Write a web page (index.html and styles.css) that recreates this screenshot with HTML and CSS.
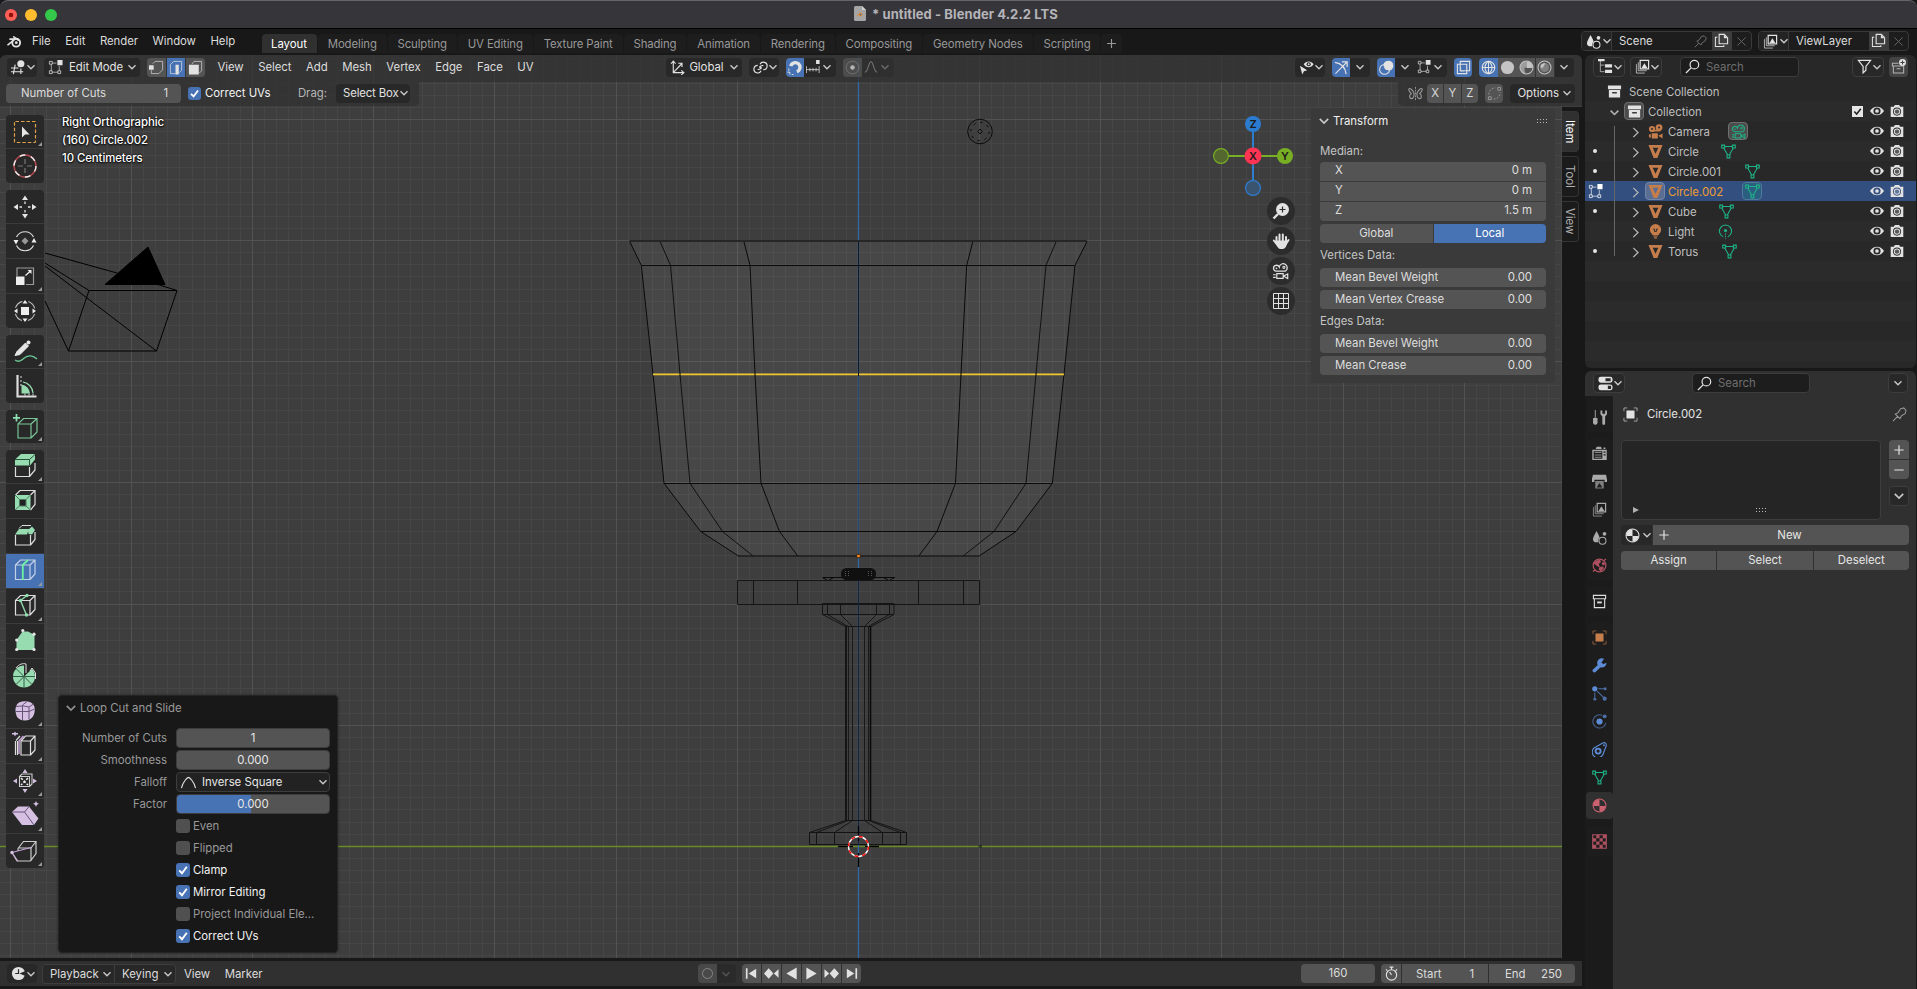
FILE: index.html
```html
<!DOCTYPE html>
<html lang="en">
<head>
<meta charset="utf-8">
<title>* untitled - Blender 4.2.2 LTS</title>
<link rel="stylesheet" href="styles.css">
</head>
<body>
<svg class="sprite" xmlns="http://www.w3.org/2000/svg">
  <symbol id="chev" viewBox="0 0 10 10"><path d="M1.500 3.300L5 6.800 8.500 3.300" fill="none" stroke="currentColor" stroke-width="1.400"/></symbol>
  <symbol id="chevr" viewBox="0 0 10 10"><path d="M3 .8L7.300 5 3 9.200" fill="none" stroke="currentColor" stroke-width="1.200"/></symbol>
  <symbol id="check" viewBox="0 0 14 14"><path d="M3.200 7.300L6 10.200 10.800 3.800" fill="none" stroke="#fff" stroke-width="1.900"/></symbol>
  <symbol id="blender" viewBox="0 0 16 16"><path d="M1 11.500L8.500 5.500H3.200M7.200 3L12 6.600" fill="none" stroke="currentColor" stroke-width="1.700" stroke-linecap="round"/><circle cx="9.800" cy="9.300" r="4.200" fill="none" stroke="currentColor" stroke-width="2"/><circle cx="9.900" cy="9.200" r="1.500" fill="currentColor"/></symbol>
  <symbol id="view3d" viewBox="0 0 16 16"><path d="M0 8.500H8M0 12.500H13M4.500 5L2.500 15M10.500 9V15" fill="none" stroke="currentColor" stroke-width="1.200"/><circle cx="10.500" cy="4" r="3.800" fill="currentColor"/></symbol>
  <symbol id="editmode" viewBox="0 0 16 16"><path d="M3.500 4.500V11.500M4.500 13H10.500M12 6.500V11.500M4.500 3.300H9" fill="none" stroke="currentColor" opacity=".7"/><path d="M1.500 1.500h3v3h-3zM1.500 11.500h3v3h-3zM10.500 11.500h3v3h-3z" fill="none" stroke="currentColor" opacity=".8"/><path d="M10 0h5.500v5.500H10z" fill="currentColor"/></symbol>
  <symbol id="selv" viewBox="0 0 16 16"><path d="M2.500 11V14.500H10.500L14.500 10.500V1.500H6.500L4 4" fill="none" stroke="currentColor" opacity=".7"/><path d="M0 5.500h5v5H0z" fill="currentColor"/></symbol>
  <symbol id="sele" viewBox="0 0 16 16"><path d="M8 14.500H2.500V5L6 1.500H14.500V11L12 13.500" fill="none" stroke="currentColor" opacity=".75"/><path d="M8 5h3.500v10.500H8z" fill="currentColor"/></symbol>
  <symbol id="self" viewBox="0 0 16 16"><path d="M4 4.500L6.500 1.500H14.500V11.500L12 14" fill="none" stroke="currentColor" opacity=".7"/><path d="M1 5h10.500v10.500H1z" fill="currentColor"/></symbol>
  <symbol id="orient" viewBox="0 0 16 16"><path d="M3.500 1V13.500H15M3.500 13.500L12.500 4M1 4L3.500 1.200 6 4M12 11L14.800 13.500 12 15.800M8.800 3.500H12.800V7.500" fill="none" stroke="currentColor" stroke-width="1.200"/></symbol>
  <symbol id="pivot" viewBox="0 0 16 16"><path d="M7.500 4.500A4 4 0 1 1 11 10.300M8.600 11.500A4 4 0 1 1 5 5.800M5 10a4 4 0 0 0 4-1.500M11 6a4 4 0 0 0-4 1.500" fill="none" stroke="currentColor" stroke-width="1.200"/><circle cx="8" cy="8" r="1.300" fill="currentColor"/></symbol>
  <symbol id="magnet" viewBox="0 0 16 16"><path d="M4 6.500A5 5 0 1 1 10.500 12.500" fill="none" stroke="currentColor" stroke-width="3.600"/><path d="M2 9v2.500M5 15.500H7M.5 13h2.500v2.500" stroke="currentColor" fill="none"/></symbol>
  <symbol id="snapinc" viewBox="0 0 16 16"><path d="M.5 7V15M4.500 9V13M8 9V13M11.500 9V13M15 7V15M.5 11H15" fill="none" stroke="currentColor" opacity=".85"/><path d="M11.500 0h4v4.500h-4z" fill="currentColor"/></symbol>
  <symbol id="prop" viewBox="0 0 16 16"><circle cx="8" cy="8" r="6.800" fill="none" stroke="currentColor" opacity=".35"/><circle cx="8" cy="8" r="2.400" fill="currentColor"/></symbol>
  <symbol id="smooth" viewBox="0 0 16 16"><path d="M1 14C5 14 5 2 8 2S11 14 15 14" fill="none" stroke="currentColor" stroke-width="1.200"/></symbol>
  <symbol id="invsq" viewBox="0 0 16 16"><path d="M.5 14C2 7 7 2.500 8 2.500S14 7 15.500 14" fill="none" stroke="currentColor" stroke-width="1.200"/></symbol>
  <symbol id="viewobj" viewBox="0 0 16 16"><path d="M5 4.500C7.500.5 13 .5 15.500 4.500 13 8.800 7.500 8.800 5 4.500z" fill="currentColor"/><circle cx="10.300" cy="4.500" r="2.200" fill="#282828"/><circle cx="10.300" cy="4.500" r="1" fill="currentColor"/><path d="M1 6L3.500 15.500 5.300 12 8.800 11z" fill="currentColor"/></symbol>
  <symbol id="gizmo" viewBox="0 0 16 16"><path d="M1 2.500C8 3.500 12 8 13 15M1.500 14.500L13.500 2.500M8.500 2H14V7.500" fill="none" stroke="currentColor" stroke-width="1.300"/></symbol>
  <symbol id="overlay" viewBox="0 0 16 16"><circle cx="10" cy="6" r="5.300" fill="currentColor"/><circle cx="6" cy="10" r="5.300" fill="none" stroke="currentColor" stroke-width="1.100"/><path d="M5 6.500a4 4 0 0 0 4.500 4.800" fill="none" stroke="#4772b3"/></symbol>
  <symbol id="xray" viewBox="0 0 16 16"><path d="M4.500 1.500h10v10h-10zM1.500 4.500h10v10h-10z" fill="none" stroke="currentColor" stroke-width="1.200"/><path d="M5 8v4h4" fill="none" stroke="currentColor" stroke-dasharray="1 1"/></symbol>
  <symbol id="wire" viewBox="0 0 16 16"><circle cx="8" cy="8" r="6.700" fill="none" stroke="currentColor" stroke-width="1.200"/><path d="M8 1V15M1 8H15M8 1.300C3 5 3 11 8 14.700M8 1.300C13 5 13 11 8 14.700" fill="none" stroke="currentColor" stroke-width="1.100"/></symbol>
  <symbol id="solid" viewBox="0 0 16 16"><circle cx="8" cy="8" r="7" fill="currentColor"/></symbol>
  <symbol id="matball" viewBox="0 0 16 16"><circle cx="8" cy="8" r="6.900" fill="none" stroke="currentColor" stroke-width="1.100"/><path d="M8 1.300V8.500H1.300A6.700 6.700 0 0 1 8 1.300zM8 8.500H14.600A6.700 6.700 0 0 1 8 14.700z" fill="currentColor"/></symbol>
  <symbol id="shadball" viewBox="0 0 16 16"><circle cx="8" cy="8" r="6.900" fill="none" stroke="currentColor" stroke-width="1.100"/><path d="M8 1.300A6.700 6.700 0 0 0 1.300 8C1.300 12 4 14.700 8 14.700 6 13 5.500 10.500 6 8H8z" fill="currentColor" opacity=".65"/><path d="M8 1.300V8.500H14.600A6.700 6.700 0 0 0 8 1.300z" fill="currentColor"/></symbol>
  <symbol id="rendball" viewBox="0 0 16 16"><circle cx="8" cy="8" r="6.900" fill="none" stroke="currentColor" stroke-width="1.100"/><circle cx="8" cy="8" r="4.800" fill="currentColor" opacity=".4"/><path d="M3.500 7A5 5 0 0 1 9 3.500L5.500 9z" fill="currentColor"/></symbol>
  <symbol id="mirror" viewBox="0 0 16 16"><path d="M6.500 8C5 3 1 1.500.8 3.500S3 7.500 3.500 8C1 9.500 1.500 13.500 3.500 13.500S6.500 11 6.500 8zM9.500 8C11 3 15 1.500 15.200 3.500S13 7.500 12.500 8C15 9.500 14.500 13.500 12.500 13.500S9.500 11 9.500 8z" fill="none" stroke="currentColor" stroke-width="1.200"/><path d="M8 1V15.500" stroke="currentColor" stroke-dasharray="2 1"/></symbol>
  <symbol id="automerge" viewBox="0 0 16 16"><path d="M1.500 11.500h3v3h-3zM11.500 1.500h3v3h-3z" fill="none" stroke="currentColor"/><path d="M2 9C2 5 5 2 9 2M7 14C11 14 14 11 14 7" fill="none" stroke="currentColor" stroke-dasharray="2 1.500"/></symbol>
  <symbol id="scene" viewBox="0 0 16 16"><path d="M4.800 1C7 5 8.500 7.500 8.500 10A3.800 3.800 0 0 1 1 10C1 7.500 3 5 4.800 1z" fill="currentColor"/><circle cx="11" cy="11.500" r="4.400" fill="var(--bg,#181818)"/><circle cx="11.200" cy="11.500" r="3.700" fill="none" stroke="currentColor" stroke-width="1.100"/><circle cx="13.300" cy="4" r="2" fill="currentColor"/></symbol>
  <symbol id="layers" viewBox="0 0 16 16"><path d="M5.500 1.500h9v9h-9z" fill="none" stroke="currentColor" stroke-width="1.300"/><path d="M3.500 3.500v9h9M1.500 5.500v9.500h9" fill="none" stroke="currentColor" opacity=".75"/><path d="M7 9.500L10 4.500 13.200 9.500z" fill="currentColor"/></symbol>
  <symbol id="pin" viewBox="0 0 16 16"><path d="M1 15L6 10M3.500 7.500L8.500 12.500 10 9.500 14 7 15 3.500 12.500 1 9 2 6.500 6z" fill="none" stroke="currentColor" stroke-width="1.100"/></symbol>
  <symbol id="dup" viewBox="0 0 16 16"><path d="M5.500 1.500H11L14.500 5V11.500H5.500z" fill="none" stroke="currentColor" stroke-width="1.200"/><path d="M10.500 1.500V5.500H14.500z" fill="currentColor"/><path d="M3.500 4.500H1.500V14.500H10.500V13" fill="none" stroke="currentColor" stroke-width="1.100"/></symbol>
  <symbol id="ex" viewBox="0 0 16 16"><path d="M3 3L13 13M13 3L3 13" stroke="currentColor" stroke-width="1.200" fill="none"/></symbol>
  <symbol id="outl" viewBox="0 0 16 16"><path d="M2.500 1V13.500H7M2.500 6.500H7" fill="none" stroke="currentColor" opacity=".7"/><path d="M0 0h7v2.500H0zM7.500 5.500H15V9H7.500zM7.500 11.500H15V15H7.500z" fill="currentColor"/></symbol>
  <symbol id="search" viewBox="0 0 16 16"><circle cx="10" cy="6" r="4.600" fill="none" stroke="currentColor" stroke-width="1.300"/><path d="M6.500 9.500L1 15" stroke="currentColor" stroke-width="1.400"/></symbol>
  <symbol id="filter" viewBox="0 0 16 16"><path d="M1.500 1.500H14.500L9.500 8V12L6.500 14.800V8z" fill="none" stroke="currentColor" stroke-width="1.300"/></symbol>
  <symbol id="newcol" viewBox="0 0 16 16"><path d="M8 4.500H1.500V7.500H14M2.500 7.500V15H13.500V8M6 10.500H10" fill="none" stroke="currentColor" stroke-width="1.100" opacity=".7"/><circle cx="12.300" cy="3.700" r="3.700" fill="currentColor"/><path d="M12.300 1.500v4.400M10.100 3.700h4.400" stroke="#444" stroke-width="1.100"/></symbol>
  <symbol id="coll" viewBox="0 0 16 16"><path d="M1 1.500h14v4H1zM2 6.500h12v8H2z" fill="currentColor"/><path d="M5.500 8.500h5v1.700h-5z" fill="#3a3a3a"/></symbol>
  <symbol id="collo" viewBox="0 0 16 16"><path d="M1.500 1.500h13v3.500h-13zM2.500 5.500V14.500H13.500V5.500" fill="none" stroke="currentColor" stroke-width="1.200"/><path d="M5.500 8h5v2h-5z" fill="currentColor"/></symbol>
  <symbol id="cam" viewBox="0 0 16 16"><circle cx="4.300" cy="5.300" r="3.300" fill="currentColor"/><circle cx="11.800" cy="3.800" r="3.600" fill="currentColor"/><circle cx="4.300" cy="5.300" r="1.100" fill="#2b2b2b"/><circle cx="11.800" cy="3.800" r="1.100" fill="#2b2b2b"/><path d="M4 6h9v2H4zM4 9.800h6.500v5.700H4zM1 11h2v3.500H1zM11 12.500L15.500 10v5.500z" fill="currentColor"/></symbol>
  <symbol id="camo" viewBox="0 0 16 16"><path d="M4 8.200A2.800 2.800 0 1 1 6.800 4.300 3.800 3.800 0 1 1 12.500 8.200z" fill="none" stroke="currentColor" stroke-width="1.200"/><circle cx="4.200" cy="5.500" r=".8" fill="currentColor"/><circle cx="11.200" cy="4.500" r="1" fill="none" stroke="currentColor"/><path d="M4.500 10.500h6v4.500h-6zM1 11.500h2.500M1 14h2.500M11 12.700l3.800-2v4.500z" fill="none" stroke="currentColor" stroke-width="1.100"/></symbol>
  <symbol id="mesh" viewBox="0 0 16 16"><path d="M.5 1H15.500L10 14.800H6zM5 4L8 10.500 11 4z" fill="currentColor" fill-rule="evenodd"/></symbol>
  <symbol id="meshd" viewBox="0 0 16 16"><path d="M.8 1.200h3v3h-3zM12.200 1.200h3v3h-3zM6.500 11.800h3v3h-3zM4 2.700H12M3 4.500L7 11.500M13 4.500L9 11.500" fill="none" stroke="currentColor" stroke-width="1.150"/></symbol>
  <symbol id="bulb" viewBox="0 0 16 16"><circle cx="8" cy="6" r="6" fill="currentColor"/><path d="M5 9h6v2.300H5zM5.500 12.700h5M6.500 14.800h3" stroke="currentColor" stroke-width="1.100" fill="currentColor"/><path d="M5.500 5.500h1.500v2.500h2V5.500h1.500" stroke="#2b2b2b" fill="none"/></symbol>
  <symbol id="lightd" viewBox="0 0 16 16"><path d="M5.500 13.500A6.500 6.500 0 1 1 10.500 13.500" fill="none" stroke="currentColor" stroke-width="1.150"/><circle cx="8" cy="7" r="1.700" fill="currentColor"/><path d="M8 10v5.800" stroke="currentColor" stroke-dasharray="1.500 1"/></symbol>
  <symbol id="eye" viewBox="0 0 16 16"><path d="M0 8C4 1.500 12 1.500 16 8 12 14.500 4 14.500 0 8z" fill="currentColor"/><circle cx="8" cy="8" r="4.100" fill="var(--row,#2a2a2a)"/><circle cx="8" cy="8" r="2.100" fill="currentColor"/></symbol>
  <symbol id="photo" viewBox="0 0 16 16"><path d="M.8 3H4.500L5.500 1H10.500L11.500 3H15.200V14.800H.8z" fill="currentColor"/><circle cx="8" cy="8.700" r="4.600" fill="var(--row,#2a2a2a)"/><circle cx="8" cy="8.700" r="3.600" fill="currentColor"/><circle cx="8" cy="8.700" r="2.500" fill="var(--row,#2a2a2a)" opacity=".75"/></symbol>
  <symbol id="props" viewBox="0 0 16 16"><rect x=".5" y=".8" width="15" height="6.300" rx="2.500" fill="currentColor"/><rect x=".5" y="9" width="15" height="6.300" rx="2.500" fill="currentColor"/><path d="M8 2.300h5.500v3.400H8zM10.500 10.500h3.500v3.400h-3.500z" fill="#282828"/></symbol>
  <symbol id="tool" viewBox="0 0 16 16"><path d="M3.500 0V8" stroke="currentColor"/><path d="M1 9.500C1 8 6 8 6 9.500S5.500 10.500 6 12.500a2.500 3.200 0 0 1-5 0C1.500 10.500 1 10.500 1 9.500z" fill="currentColor"/><path d="M9 .5v4L11 7v7.500a1.500 1.500 0 0 0 3 0V7l2-2.500v-4h-2v3.500h-3V.5z" fill="currentColor"/></symbol>
  <symbol id="render" viewBox="0 0 16 16"><path d="M4 3.200L5 .8h4.500l1 2.400zM12.300 1.500h2v1.700h-2zM.3 4h15.400v11H.3z" fill="currentColor"/><path d="M1.800 5.500h9.200v8H1.800z" fill="#1d1d1d"/><path d="M3 7h7M3 9.500h7M3 12h7" stroke="currentColor" stroke-width="1.100" opacity=".75"/><path d="M12.300 6.500h2.200M12.300 9.500h2.200" stroke="#1d1d1d" stroke-width="1.300"/></symbol>
  <symbol id="output" viewBox="0 0 16 16"><path d="M1 .8h14L16 6v2.500h-2.500V6h-11v2.500H0V5z" fill="currentColor"/><path d="M3.500 7.500h9v8h-9z" fill="currentColor" opacity=".7"/><path d="M5 14.500L8 9.500 11 14.500z" fill="#1d1d1d"/></symbol>
  <symbol id="world" viewBox="0 0 16 16"><circle cx="8" cy="8" r="6.800" fill="none" stroke="currentColor" stroke-width="1.300"/><path d="M2 6C4 2.500 6 2 9 2.300L9.500 4.500 7 6.500 8.500 9 7 9.500 4 7.500zM8 9.500L12 9 12.500 11.500 9 14 7 12zM11 4l3 1.500-1 2.500-2.500-1z" fill="currentColor"/><path d="M1 14.500L3.500 12.500M12.500 3L15 1" stroke="currentColor" stroke-width="1.300"/></symbol>
  <symbol id="object" viewBox="0 0 16 16"><path d="M1 4.500V1h3.500M11.500 1H15v3.500M15 11.500V15h-3.500M4.500 15H1v-3.500" fill="none" stroke="currentColor" opacity=".65"/><path d="M3.700 3.700h8.600v8.600H3.700z" fill="currentColor"/></symbol>
  <symbol id="wrench" viewBox="0 0 16 16"><path d="M2.500 13.500L9 7.500" stroke="currentColor" stroke-width="3.800" stroke-linecap="round"/><path d="M12.800.8A5 5 0 1 0 15.500 5L12.500 6.500 10 5z" fill="currentColor"/></symbol>
  <symbol id="particles" viewBox="0 0 16 16"><circle cx="3" cy="3" r="2.800" fill="currentColor"/><g opacity=".75"><path d="M7 3H13M3 7V13M5.500 5.500L13 13" stroke="currentColor" stroke-width="1.100"/><circle cx="14" cy="3" r="1.600" fill="currentColor"/><circle cx="3" cy="14" r="1.600" fill="currentColor"/><circle cx="13.500" cy="13.500" r="2.200" fill="currentColor"/></g></symbol>
  <symbol id="physics" viewBox="0 0 16 16"><circle cx="8" cy="8" r="3.300" fill="currentColor"/><path d="M10.500 1.400A7 7 0 1 0 14.800 9.500" fill="none" stroke="currentColor" stroke-width="1.100" opacity=".65"/><circle cx="13.500" cy="2.500" r="2.100" fill="currentColor" opacity=".75"/></symbol>
  <symbol id="constr" viewBox="0 0 16 16"><circle cx="6.500" cy="9.700" r="2.700" fill="none" stroke="currentColor" stroke-width="2"/><path d="M2 6.500L11.500 1C14 0 16 2 15 4.500L12 12.500A6 6 0 1 1 2 6.500z" fill="none" stroke="currentColor" stroke-width="1.200"/><circle cx="12.700" cy="3.500" r="1" fill="currentColor"/></symbol>
  <symbol id="checker" viewBox="0 0 16 16"><path d="M.8.800h14.400v14.400H.8z" fill="none" stroke="currentColor" stroke-width="1.300"/><path d="M4.500 1h3.500v3.500H4.500zM11.500 1H15v3.500h-3.500zM1 4.500h3.500V8H1zM8 4.500h3.500V8H8zM4.500 8H8v3.500H4.500zM11.500 8H15v3.500h-3.500zM1 11.500h3.500V15H1zM8 11.500h3.500V15H8z" fill="currentColor"/></symbol>
  <symbol id="plus" viewBox="0 0 16 16"><path d="M8 3.300V12.700M3.300 8H12.700" stroke="currentColor" stroke-width="1.200"/></symbol>
  <symbol id="minus" viewBox="0 0 16 16"><path d="M3.300 8H12.700" stroke="currentColor" stroke-width="1.200"/></symbol>
  <symbol id="timeline" viewBox="0 0 16 16"><circle cx="8" cy="8" r="7" fill="currentColor"/><path d="M8 3.500V8L4.500 8" stroke="#282828" stroke-width="1.300" fill="none"/><path d="M9 8L16 5V11z" fill="#282828"/></symbol>
  <symbol id="clock" viewBox="0 0 16 16"><circle cx="8" cy="9.500" r="5.500" fill="none" stroke="currentColor" stroke-width="1.200"/><path d="M8 9.500L6 6.500M8 4V1.500M6 1.200h4M2 3.500L3.500 5M14 3.500L12.500 5" fill="none" stroke="currentColor" stroke-width="1.200"/></symbol>
</svg>

<div class="titlebar">
  <span class="light red"></span><span class="light amber"></span><span class="light green"></span>
  <div class="wtitle"><svg width="12" height="15" viewBox="0 0 12 15"><path d="M0 1.500Q0 0 1.500 0H8L12 4V13.500Q12 15 10.500 15H1.500Q0 15 0 13.500z" fill="#a5a5a6"/><path d="M8 0L12 4H8z" fill="#d0d0d0"/><circle cx="6.500" cy="8.500" r="2" fill="#d6883f"/><path d="M2.500 10L6 7" stroke="#d6883f"/><circle cx="6.600" cy="8.500" r=".8" fill="#3d6c9a"/></svg><span>* untitled - Blender 4.2.2 LTS</span></div>
</div>

<div class="topbar">
  <svg class="i16 blogo"><use href="#blender"/></svg>
  <div class="menus main"><span>File</span><span>Edit</span><span>Render</span><span>Window</span><span>Help</span></div>
  <div class="wtabs"><span class="on">Layout</span><span>Modeling</span><span>Sculpting</span><span>UV Editing</span><span>Texture Paint</span><span>Shading</span><span>Animation</span><span>Rendering</span><span>Compositing</span><span>Geometry Nodes</span><span>Scripting</span><span class="add"><svg class="i16"><use href="#plus"/></svg></span></div>
  <div class="idsel scene"><div class="ic"><svg class="i16"><use href="#scene"/></svg><svg class="cv"><use href="#chev"/></svg></div><span>Scene</span><svg class="i14 dim"><use href="#pin"/></svg><div class="sq"><svg class="i16"><use href="#dup"/></svg></div><div class="xx"><svg class="i14"><use href="#ex"/></svg></div></div>
  <div class="idsel vlayer"><div class="ic"><svg class="i16"><use href="#layers"/></svg><svg class="cv"><use href="#chev"/></svg></div><span>ViewLayer</span><div class="sq"><svg class="i16"><use href="#dup"/></svg></div><div class="xx"><svg class="i14"><use href="#ex"/></svg></div></div>
</div>

<div class="workspace">
 <div class="leftcol">
  <div class="viewport">
   <svg class="scene3d" width="1562" height="903" viewBox="0 55 1562 903">
    <g id="grid" shape-rendering="crispEdges"></g>
    <path d="M0 846.500H1562" stroke="#678b26" stroke-width="1.500"/>
    <path d="M858.500 55V958" stroke="#3168a6" stroke-width="1.300"/>
    <path d="M629.700 241H1087L1075 265.300 1064 374.300 1052.300 483.300 1016 531.500 979.500 555.700H738L700.700 531.500 664 483.300 653 374.300 641.300 265.300z" fill="#fff" fill-opacity=".05"/>
    <path d="M980.500 143V955" stroke="#333" stroke-width="1" opacity=".7"/>
    <g fill="none" stroke="#0a0a0a" stroke-width="1">
     <path d="M629.700 241.500L641.300 265.300 653 374.300 664 483.300 700.700 531.500 738 555.700M1087 241.500L1075 265.300 1064 374.300 1052.300 483.300 1016 531.500 979.500 555.700"/>
     <path d="M641.500 265.500H1075M664 483.500H1052.300M700.700 531.500H1016"/>
     <path d="M629.500 241H1087" stroke="#262626" stroke-width="2"/><path d="M738 556H979.500" stroke="#1c1c1c" stroke-width="1.600"/>
     <path d="M744 242L750 265.300 755 374.300 761 483.300 779.500 531.500 797.500 555.700M972.700 242L966.700 265.300 961 374.300 955.500 483.300 937 531.500 919 555.700"/>
     <path d="M660.300 242L670.500 265.300 680 374.300 690 483.300 722.500 531.500 752.700 555.700M1056 242L1046 265.300 1036 374.300 1026 483.300 994 531.500 963.500 555.700" stroke-width=".9"/>
     <path d="M858.500 242V374" stroke="#0c1a30"/><path d="M858.500 374V556" stroke="#0c1a30" stroke-opacity=".45"/>
     <path d="M737.500 580.500H979.500V604.500H737.500zM753.500 580.500V604.500M797.500 580.500V604.500M918.500 580.500V604.500M963.500 580.500V604.500" stroke="#151515"/>
     <path d="M822.500 577.500H895M823 578L827 580M890 580L894 578M829 580l4-2M884 578l4 2"/>
     <path d="M822.500 603.500H894V614.500H822.500zM827.500 604V614M840.500 604V614M876.500 604V614M889.500 604V614M822.500 614.500L845.500 626.500H871L894 614.500M827.500 614.500L848 626.500M889.500 614.500L868.500 626.500M840.500 614.500L852.500 626.500M876.500 614.500L864.500 626.500" stroke="#151515"/>
     <path d="M846 626.500V820.500M870.500 626.500V820.500" stroke-width="1.600"/>
     <path d="M848.500 626.500V820.500M852.500 626.500V820.500M864.500 626.500V820.500M868.500 626.500V820.500" stroke="#191919"/>
     <path d="M858.500 580V844" stroke="#152238"/>
     <path d="M845.500 820.500H871L906.500 832.500V844.500H809.500V832.500L845.500 820.500M809.500 832.500H906.500M848 820.500L816.500 832.500V844M868.500 820.500L900.500 832.500V844M852.500 820.500L834.500 832.500V844M864.500 820.500L882.500 832.500V844" stroke="#141414"/>
     <path d="M838 846.500H853M865 846.500H879M858.500 826V841M858.500 853V867" stroke="#000" stroke-width="1.300"/>
    </g>
    <rect x="841" y="568" width="35" height="12" rx="5.500" fill="#101010"/><path d="M845.500 571v6M848.500 571v6M868.500 571v6M871.500 571v6" stroke="#555" stroke-dasharray="1 1" fill="none"/>
    <path d="M653 374.300H1064" stroke="#f0c52e" stroke-width="1.700"/>
    <path d="M680 373v3M755 373v3M858.500 373v3M961 373v3M1036 373v3" stroke="#111"/>
    <rect x="856.800" y="554.300" width="3.400" height="3.400" fill="#f08a28" stroke="#3a2008" stroke-width=".8"/>
    <circle cx="858.500" cy="846.500" r="10" fill="none" stroke="#fff" stroke-width="1.300"/><circle cx="858.500" cy="846.500" r="10" fill="none" stroke="#f00" stroke-width="1.400" stroke-dasharray="3.930 3.930"/>
    <circle cx="980.300" cy="846.300" r="1.300" fill="none" stroke="#222"/>
    <g fill="none" stroke="#000"><path d="M105 284.500L148 247 165 284.500z" fill="#000"/><path d="M89 290.500H177L156.500 351H68.500zM45 253L117 273M158 284.500L177 290.500M45 263L89 290.500M45 266L156.500 351M45 301L68.500 351"/></g>
    <g fill="none" stroke="#0a0a0a"><circle cx="980" cy="131.500" r="12.300"/><circle cx="980" cy="131.500" r="9.200" stroke-dasharray="2.500 4.700"/><path d="M980 129l2.300 2.500-2.300 2.500-2.300-2.500z"/></g>
    <g stroke-width="2"><path d="M1253 124V188" stroke="#2f7dce"/><path d="M1221 156H1285" stroke="#78ae24"/><circle cx="1253" cy="124" r="8" fill="#2b7cd0"/><circle cx="1285" cy="156" r="8" fill="#78ae24"/><circle cx="1221" cy="156" r="7.400" fill="#53672f" stroke="#78ae24" stroke-width="1.200"/><circle cx="1253" cy="188" r="7.400" fill="#3a5470" stroke="#2f7dce" stroke-width="1.200"/><circle cx="1253" cy="156" r="8.500" fill="#ff3352"/></g>
    <g class="axis"><text x="1253" y="128.300">Z</text><text x="1253" y="160.300">X</text><text x="1285" y="160.300">Y</text></g>
    <g fill="#2c2c2c"><circle cx="1281" cy="211" r="14"/><circle cx="1281" cy="241" r="14"/><circle cx="1281" cy="271" r="14"/><circle cx="1281" cy="301" r="14"/></g>
    <circle cx="1282.500" cy="209.500" r="6.500" fill="#e2e2e2"/><path d="M1278 214L1273.500 218.500" stroke="#e2e2e2" stroke-width="2.400"/><path d="M1279.500 209.500h6M1282.500 206.500v6" stroke="#2c2c2c" stroke-width="1.200"/>
    <path d="M1276.500 237V242M1279.500 234.500V241M1282.800 234.500V241M1286 237V241M1273.800 240.500L1277 244.500M1288.500 240L1286 244" stroke="#e2e2e2" stroke-width="2" stroke-linecap="round"/><path d="M1275.500 240.500H1287V243.500C1286.500 247 1285 249 1281.500 249S1277.500 247 1275.500 243.500z" fill="#e2e2e2"/>
    <g color="#e2e2e2"><use href="#camo" x="1272" y="262.500" width="17" height="17"/></g>
    <path d="M1273.500 293.500h15v15h-15zM1278.500 293.500v15M1283.500 293.500v15M1273.500 298.500h15M1273.500 303.500h15" fill="none" stroke="#e2e2e2"/>
   </svg>

   <div class="vhead">
    <div class="dd w30"><svg class="i16"><use href="#view3d"/></svg><svg class="cv"><use href="#chev"/></svg></div>
    <div class="dd mode"><svg class="i16"><use href="#editmode"/></svg><span>Edit Mode</span><svg class="cv"><use href="#chev"/></svg></div>
    <div class="grp selm"><div><svg class="i16"><use href="#selv"/></svg></div><div class="blue"><svg class="i16"><use href="#sele"/></svg></div><div><svg class="i16"><use href="#self"/></svg></div></div>
    <div class="menus vm"><span>View</span><span>Select</span><span>Add</span><span>Mesh</span><span>Vertex</span><span>Edge</span><span>Face</span><span>UV</span></div>
    <div class="hmid">
     <div class="dd glob"><svg class="i16"><use href="#orient"/></svg><span>Global</span><svg class="cv"><use href="#chev"/></svg></div>
     <div class="dd w30"><svg class="i16"><use href="#pivot"/></svg><svg class="cv"><use href="#chev"/></svg></div>
     <div class="grp"><div class="blue"><svg class="i16"><use href="#magnet"/></svg></div><div class="dark"><svg class="i16 sm"><use href="#snapinc"/></svg><svg class="cv"><use href="#chev"/></svg></div></div>
     <div class="grp off"><div><svg class="i16"><use href="#prop"/></svg></div><div class="dark"><svg class="i16 sm"><use href="#smooth"/></svg><svg class="cv"><use href="#chev"/></svg></div></div>
    </div>
    <div class="hright">
     <div class="dd w30"><svg class="i16"><use href="#viewobj"/></svg><svg class="cv"><use href="#chev"/></svg></div>
     <div class="grp"><div class="blue"><svg class="i16"><use href="#gizmo"/></svg></div><div class="dark cvo"><svg class="cv"><use href="#chev"/></svg></div></div>
     <div class="grp"><div class="blue"><svg class="i16"><use href="#overlay"/></svg></div><div class="dark cvo"><svg class="cv"><use href="#chev"/></svg></div><div class="dark"><svg class="i16 sm"><use href="#editmode"/></svg><svg class="cv"><use href="#chev"/></svg></div></div>
     <div class="grp"><div class="blue"><svg class="i16"><use href="#xray"/></svg></div></div>
     <div class="grp shad"><div class="blue"><svg class="i16"><use href="#wire"/></svg></div><div><svg class="i16"><use href="#solid"/></svg></div><div><svg class="i16"><use href="#shadball"/></svg></div><div><svg class="i16"><use href="#rendball"/></svg></div><div class="dark cvo"><svg class="cv"><use href="#chev"/></svg></div></div>
    </div>
   </div>
   <div class="vtool">
    <div class="tleft"><div class="num"><span>Number of Cuts</span><span>1</span></div><svg class="cb on"><use href="#check"/></svg><span class="wh">Correct UVs</span><span class="drag">Drag:</span><div class="dd sbox"><span>Select Box</span><svg class="cv"><use href="#chev"/></svg></div></div>
    <div class="tright"><svg class="i16 grey"><use href="#mirror"/></svg><div class="grp xyz"><div>X</div><div>Y</div><div>Z</div></div><div class="grp dimg"><div><svg class="i16"><use href="#automerge"/></svg></div></div><div class="dd opt"><span>Options</span><svg class="cv"><use href="#chev"/></svg></div></div>
   </div>

   <div class="vinfo"><div>Right Orthographic</div><div>(160) Circle.002</div><div>10 Centimeters</div></div>

   <div class="toolbar">
    <div class="tg">
     <div class="tb c"><svg viewBox="0 0 24 24"><rect x="1.500" y="1.500" width="21" height="21" rx="1" fill="none" stroke="#e0a24a" stroke-width="1.200" stroke-dasharray="3.500 2"/><path d="M9 6.500V17.500L12 14.500H16.500z" fill="#e6e6e6"/></svg></div>
     <div class="tb"><svg viewBox="0 0 24 24"><circle cx="12" cy="12" r="11" fill="none" stroke="#b04a4e" stroke-width="1.400"/><circle cx="12" cy="12" r="11" fill="none" stroke="#eee" stroke-width="1.400" stroke-dasharray="5.760 5.760"/><path d="M12 5v5M12 14v5M5 12h5M14 12h5" stroke="#777" stroke-width="1.200"/></svg></div>
    </div>
    <div class="tg">
     <div class="tb"><svg viewBox="0 0 24 24" fill="#e6e6e6"><path d="M12 .5L15 5H9zM12 23.500L9 19h6zM.5 12L5 9v6zM23.500 12L19 15V9z"/><path d="M12 6.500v2.500M12 15v2.500M6.500 12h2.500M15 12H17.500" stroke="#e6e6e6" stroke-width="1.300"/></svg></div>
     <div class="tb"><svg viewBox="0 0 24 24" fill="none" stroke="#ddd" stroke-width="1.200"><path d="M3.500 8A9.500 9.500 0 0 1 20.500 8M20.500 16.500A9.500 9.500 0 0 1 3.500 16.500"/><path d="M.5 11h5L3 15.500zM18.500 13.500h5L21 9z" fill="#eee" stroke="none"/><path d="M12 8.500L15.500 12 12 15.500 8.500 12z" fill="#999" stroke="none"/></svg></div>
     <div class="tb c"><svg viewBox="0 0 24 24"><path d="M4 12V4H20.500V20.500H13" fill="none" stroke="#999" stroke-width="1.200"/><path d="M3 12.500h8.500V21H3z" fill="#eee"/><path d="M12.500 11.500L17 7.500" stroke="#eee" stroke-width="1.300"/><path d="M14.500 6h4v4z" fill="#eee"/></svg></div>
     <div class="tb"><svg viewBox="0 0 24 24"><circle cx="12" cy="12" r="10" fill="none" stroke="#bbb" stroke-width="1.100" stroke-dasharray="9.700 6" stroke-dashoffset="-3"/><path d="M8 8h8v8H8zM12 1l2.500 3.500h-5zM12 23l-2.500-3.500h5zM1 12l3.500-2.500v5zM23 12l-3.500 2.500v-5z" fill="#eee"/></svg></div>
    </div>
    <div class="tg">
     <div class="tb c"><svg viewBox="0 0 24 24"><path d="M2 15.500L4 11.500 12.500 3 15.500 6 7 14.500z" fill="#e6e6e6" stroke="#e6e6e6"/><circle cx="15.500" cy="2.500" r="2" fill="#e6e6e6"/><path d="M2 20C6 23 9 20 12 17.500S20 15 24 19" fill="none" stroke="#6cc796" stroke-width="1.300"/></svg></div>
     <div class="tb"><svg viewBox="0 0 24 24"><path d="M4.500 1V22.500H23.500" fill="none" stroke="#ddd" stroke-width="2.200"/><path d="M7 3h2M7 7h2M7 11h2M12 21.500v-2M16 21.500v-2M20 21.500v-2" stroke="#ddd"/><path d="M8.500 10.500A9.500 9.500 0 0 1 17 19.500H8.500z" fill="#97dbb1"/><path d="M10 8A12 12 0 0 1 20 19" fill="none" stroke="#97dbb1" stroke-width="1.200"/></svg></div>
    </div>
    <div class="tg"><div class="tb c"><svg viewBox="0 0 24 24"><path d="M5 9H18V23H5zM5 9L10.500 3.500H24V17L18 23M18 9L24 3.500" fill="none" stroke="#79c598" stroke-width="1.200"/><path d="M3.500-1V6.500M0 2.800H7" stroke="#8fe0b0" stroke-width="1.700"/></svg></div></div>
    <div class="tg">
     <div class="tb c"><svg viewBox="0 0 24 24"><path d="M2.500 12V21.500H16.500V12M16.500 21.500L22 15V8" fill="none" stroke="#ddd" stroke-width="1.200"/><path d="M2 4.500L8-1H22V4.500L17 10.500H2z" fill="#97dbb1"/><path d="M2 4.500H16.500V10.500M16.500 4.500L22-.5" fill="none" stroke="#28503a"/></svg></div>
     <div class="tb"><svg viewBox="0 0 24 24"><path d="M2.500 6L7 1.500H22V15.500L17.500 21M17.500 6L22 1.500" fill="none" stroke="#ddd" stroke-width="1.200"/><path d="M2 6H17.500V21H2z" fill="#97dbb1"/><path d="M6.500 10.500h6.500v6.500H6.500zM2 6L6.500 10.500M17.500 6L13 10.500M2 21L6.500 17M17.500 21L13 17" fill="#222" stroke="#4a7a5c"/></svg></div>
     <div class="tb"><svg viewBox="0 0 24 24"><path d="M2.500 11V21H17.500V11M17.500 21L22 15.500V8" fill="none" stroke="#ddd" stroke-width="1.200"/><path d="M2 10.500L6 5H16L14 10.500zM15 6L19 2.500 22 6 19 10.500 15.500 10z" fill="#97dbb1"/><path d="M6 4.500L9 1.500H18" fill="none" stroke="#ddd"/></svg></div>
     <div class="tb sel c"><svg viewBox="0 0 24 24"><path d="M2.500 6H17V20.500H2.500zM2.500 6L7.500 1H22V15L17 20.500M17 6L22 1" fill="none" stroke="#c3d1e8" stroke-width="1.200"/><path d="M9.800 21V6L15 1" fill="none" stroke="#6df0a2" stroke-width="1.800"/></svg></div>
     <div class="tb c"><svg viewBox="0 0 24 24"><path d="M2.500 6.500H17V21H2.500zM2.500 6.500L7.500 1.500H22V15.500L17 21M17 6.500L22 1.500" fill="none" stroke="#ddd" stroke-width="1.200"/><path d="M13.500 21L7.500 6.500 14 1.500" fill="none" stroke="#8fd8ab" stroke-width="1.400"/><circle cx="13.500" cy="21" r="1.700" fill="#8fe0b0"/><circle cx="7.500" cy="6.500" r="1.700" fill="#8fe0b0"/><circle cx="14" cy="1.500" r="1.700" fill="#8fe0b0"/></svg></div>
     <div class="tb"><svg viewBox="0 0 24 24"><path d="M9.500 2.500H15L21.500 6V21H3.500V11z" fill="#97dbb1"/><g fill="#e6e6e6"><circle cx="9.800" cy="1.500" r="1.600"/><circle cx="21" cy="5.200" r="1.600"/><circle cx="3.700" cy="11" r="1.600"/><circle cx="3.700" cy="20.500" r="1.600"/><circle cx="21" cy="20.500" r="1.600"/></g></svg></div>
     <div class="tb"><svg viewBox="0 0 24 24"><circle cx="11" cy="12.500" r="11" fill="#97dbb1"/><path d="M11 12.500V0H19.500V4.500z" fill="#282828"/><path d="M11 12.500V24M0 12.500H22M3.500 5L18.500 20M3.500 20L11 12.500" stroke="#356048" fill="none"/><path d="M3 4C6 0 10-1 13 0V9M19 4L22.500 9V15M19 4L17 7" stroke="#ddd" fill="none"/></svg></div>
     <div class="tb c"><svg viewBox="0 0 24 24"><path d="M6 3.500Q12 1 18 3.500Q21 5 21.500 8Q22.500 13 20 17.500Q17 21.500 12 21.500T4 18Q1.500 12 3 7.500Q4 4.500 6 3.500z" fill="#d5c0e2"/><path d="M2.500 12.500H16L21.500 10M9.500 21V6M3 7.500Q10 6 16 8L20.500 5M16 8V20M9.500 6L14 2.500" fill="none" stroke="#66537a"/></svg></div>
     <div class="tb c"><svg viewBox="0 0 24 24"><path d="M2.500 7V21M4.500 7V21M17.500 21V7H8V21zM8 7L12.500 2H22V16L17.500 21M17.500 7L22 2M3 6.500L7 2" fill="none" stroke="#ddd" stroke-width="1.200"/><path d="M6 20V7L10.500 2" fill="none" stroke="#c9a6dd" stroke-width="1.500"/><path d="M2-2.500L3-1H5V.5H3L2 2.500 1 .5-1 .5V-1L1-1z" fill="#d5c0e2"/></svg></div>
     <div class="tb c"><svg viewBox="0 0 24 24"><path d="M6.500 7.500H16.500V17.500H6.500zM6.500 7.500L9 5H19V15L16.500 17.500" fill="none" stroke="#ccc" stroke-width="1.100"/><path d="M8 9l7 7M15 9l-7 7" stroke="#eee" stroke-width="1.500" stroke-dasharray="2.500 1.500"/><g fill="#d5c0e2"><path d="M12 0l2.500 4h-5zM12 24l-2.500-4h5zM0 12l4-2.500v5zM24 12l-4 2.500v-5z"/></g></svg></div>
     <div class="tb c"><svg viewBox="0 0 24 24"><path d="M-1 8L5 2.500H16L25.500 14.500 21 21H9z" fill="#d5c0e2"/><path d="M-1 8H11.500L21 21M11.500 8L16 2.500" fill="none" stroke="#66537a"/><path d="M23-3l1 2 2 .7-2 1-1 2-1-2-2-1 2-.7z" fill="#d5c0e2"/></svg></div>
     <div class="tb c"><svg viewBox="0 0 24 24"><path d="M5 9.500L10.500 2.500H23V14.500L17.500 22H4L-1 13.500M5 9.500V12M23 2.500L18 9M5 9H18V22" fill="none" stroke="#ccc" stroke-width="1.200"/><path d="M-1 13.500L18 8.500M-1 13.500L5 22" fill="none" stroke="#c9a6dd"/><circle cx="-1" cy="13.500" r="1.700" fill="#d5c0e2"/></svg></div>
    </div>
   </div>

   <div class="redo">
    <div class="ptitle"><svg class="cv big"><use href="#chev"/></svg>Loop Cut and Slide</div>
    <div class="prow"><label>Number of Cuts</label><div class="fld">1</div></div>
    <div class="prow"><label>Smoothness</label><div class="fld">0.000</div></div>
    <div class="prow"><label>Falloff</label><div class="fld menu"><svg class="i16"><use href="#invsq"/></svg><span>Inverse Square</span><svg class="cv"><use href="#chev"/></svg></div></div>
    <div class="prow"><label>Factor</label><div class="fld half">0.000</div></div>
    <div class="prow ck"><i class="cb"></i><span>Even</span></div>
    <div class="prow ck"><i class="cb"></i><span>Flipped</span></div>
    <div class="prow ck wh"><svg class="cb on"><use href="#check"/></svg><span>Clamp</span></div>
    <div class="prow ck wh"><svg class="cb on"><use href="#check"/></svg><span>Mirror Editing</span></div>
    <div class="prow ck"><i class="cb"></i><span>Project Individual Ele...</span></div>
    <div class="prow ck wh"><svg class="cb on"><use href="#check"/></svg><span>Correct UVs</span></div>
   </div>

   <div class="npanel">
    <div class="ntitle"><svg class="cv big"><use href="#chev"/></svg><span>Transform</span><i class="dots"></i></div>
    <div class="nl first">Median:</div>
    <div class="stack"><div class="nf"><span>X</span><span>0 m</span></div><div class="nf"><span>Y</span><span>0 m</span></div><div class="nf"><span>Z</span><span>1.5 m</span></div></div>
    <div class="seg"><div>Global</div><div class="blue">Local</div></div>
    <div class="nl">Vertices Data:</div>
    <div class="nf s"><span>Mean Bevel Weight</span><span>0.00</span></div>
    <div class="nf s"><span>Mean Vertex Crease</span><span>0.00</span></div>
    <div class="nl up">Edges Data:</div>
    <div class="nf s"><span>Mean Bevel Weight</span><span>0.00</span></div>
    <div class="nf s"><span>Mean Crease</span><span>0.00</span></div>
   </div>
   <div class="ntabs"><div class="on">Item</div><div>Tool</div><div>View</div></div>
  </div>

  <div class="timeline">
   <div class="dd w30"><svg class="i16"><use href="#timeline"/></svg><svg class="cv"><use href="#chev"/></svg></div>
   <div class="grp tmen"><div class="dark pb"><span>Playback</span><svg class="cv"><use href="#chev"/></svg></div><div class="dark ky"><span>Keying</span><svg class="cv"><use href="#chev"/></svg></div></div>
   <div class="menus tmn"><span>View</span><span>Marker</span></div>
   <div class="grp rec"><div><i></i></div><div class="dark cvo"><svg class="cv"><use href="#chev"/></svg></div></div>
   <div class="grp play">
    <div><svg class="i16" viewBox="0 0 16 16"><path d="M2 2.500h1.800v11H2zM13 3v10L5 8z"/></svg></div>
    <div><svg class="i16" viewBox="0 0 16 16"><path d="M5 2.500L10 8 5 13.500 0 8zM15.500 3.500v9L10.500 8z"/></svg></div>
    <div><svg class="i16" viewBox="0 0 16 16"><path d="M13.500 1.500v13L2.500 8z"/></svg></div>
    <div><svg class="i16" viewBox="0 0 16 16"><path d="M2.500 1.500v13L13.500 8z"/></svg></div>
    <div><svg class="i16" viewBox="0 0 16 16"><path d="M11 2.500L16 8 11 13.500 6 8zM.5 3.500v9L5.500 8z"/></svg></div>
    <div><svg class="i16" viewBox="0 0 16 16"><path d="M12.200 2.500H14v11h-1.800zM3 3v10L11 8z"/></svg></div>
   </div>
   <div class="tf cur">160</div>
   <div class="grp rng"><div class="clk"><svg class="i16"><use href="#clock"/></svg></div><div class="st"><span>Start</span><span>1</span></div><div class="en"><span>End</span><span>250</span></div></div>
  </div>
 </div>

 <div class="rightcol">
  <div class="outliner">
   <div class="ohead"><div class="dd b w32"><svg class="i16"><use href="#outl"/></svg><svg class="cv"><use href="#chev"/></svg></div><div class="dd b w32"><svg class="i16"><use href="#layers"/></svg><svg class="cv"><use href="#chev"/></svg></div><div class="srch o"><svg class="i16"><use href="#search"/></svg>Search</div><div class="dd b w32 flt"><svg class="i16"><use href="#filter"/></svg><svg class="cv"><use href="#chev"/></svg></div><div class="sqb"><svg class="i16"><use href="#newcol"/></svg></div></div>
   <div class="rows">
    <div class="r"><svg class="oi sc"><use href="#coll"/></svg><span>Scene Collection</span></div>
    <div class="r"><svg class="ar dn"><use href="#chev"/></svg><b class="box"><svg class="oi"><use href="#coll"/></svg></b><span>Collection</span><div class="end"><svg class="ock" viewBox="0 0 11 11"><path d="M0 0h11v11H0z" fill="#e6e6e6"/><path d="M2.300 5.500L4.700 8 8.800 2.800" fill="none" stroke="#222" stroke-width="1.500"/></svg><svg class="oi"><use href="#eye"/></svg><svg class="oi"><use href="#photo"/></svg></div></div>
    <div class="r k"><svg class="ar"><use href="#chevr"/></svg><svg class="oi or"><use href="#cam"/></svg><span style="width:60px">Camera</span><b class="box"><svg class="oi gr"><use href="#camo"/></svg></b><div class="end"><svg class="oi"><use href="#eye"/></svg><svg class="oi"><use href="#photo"/></svg></div></div>
    <div class="r k"><i class="dot"></i><svg class="ar"><use href="#chevr"/></svg><svg class="oi or"><use href="#mesh"/></svg><span style="width:51px">Circle</span><b><svg class="oi gr"><use href="#meshd"/></svg></b><div class="end"><svg class="oi"><use href="#eye"/></svg><svg class="oi"><use href="#photo"/></svg></div></div>
    <div class="r k"><i class="dot"></i><svg class="ar"><use href="#chevr"/></svg><svg class="oi or"><use href="#mesh"/></svg><span style="width:75px">Circle.001</span><b><svg class="oi gr"><use href="#meshd"/></svg></b><div class="end"><svg class="oi"><use href="#eye"/></svg><svg class="oi"><use href="#photo"/></svg></div></div>
    <div class="r k act"><svg class="em"><use href="#editmode"/></svg><svg class="ar"><use href="#chevr"/></svg><b class="box ob"><svg class="oi or"><use href="#mesh"/></svg></b><span style="width:74px">Circle.002</span><b class="box gb"><svg class="oi gr"><use href="#meshd"/></svg></b><div class="end"><svg class="oi"><use href="#eye"/></svg><svg class="oi"><use href="#photo"/></svg></div></div>
    <div class="r k"><i class="dot"></i><svg class="ar"><use href="#chevr"/></svg><svg class="oi or"><use href="#mesh"/></svg><span style="width:49px">Cube</span><b><svg class="oi gr"><use href="#meshd"/></svg></b><div class="end"><svg class="oi"><use href="#eye"/></svg><svg class="oi"><use href="#photo"/></svg></div></div>
    <div class="r k"><svg class="ar"><use href="#chevr"/></svg><svg class="oi or"><use href="#bulb"/></svg><span style="width:48px">Light</span><b><svg class="oi gr"><use href="#lightd"/></svg></b><div class="end"><svg class="oi"><use href="#eye"/></svg><svg class="oi"><use href="#photo"/></svg></div></div>
    <div class="r k"><i class="dot"></i><svg class="ar"><use href="#chevr"/></svg><svg class="oi or"><use href="#mesh"/></svg><span style="width:52px">Torus</span><b><svg class="oi gr"><use href="#meshd"/></svg></b><div class="end"><svg class="oi"><use href="#eye"/></svg><svg class="oi"><use href="#photo"/></svg></div></div>
    <div class="tree"></div>
   </div>
  </div>
  <div class="props">
   <div class="phead"><div class="dd b w32"><svg class="i16"><use href="#props"/></svg><svg class="cv"><use href="#chev"/></svg></div><div class="srch p"><svg class="i16"><use href="#search"/></svg>Search</div><div class="dd b w20 last"><svg class="cv"><use href="#chev"/></svg></div></div>
   <div class="pbody">
    <div class="ptabs">
     <div class="g"><svg><use href="#tool"/></svg></div>
     <div class="g"><svg><use href="#render"/></svg><svg><use href="#output"/></svg><svg><use href="#layers"/></svg><svg><use href="#scene"/></svg><svg class="rd"><use href="#world"/></svg></div>
     <div class="g"><svg class="wt"><use href="#collo"/></svg></div>
     <div class="g"><svg class="orr"><use href="#object"/></svg><svg class="bl"><use href="#wrench"/></svg><svg class="bl"><use href="#particles"/></svg><svg class="bl"><use href="#physics"/></svg><svg class="bl"><use href="#constr"/></svg><svg class="gn"><use href="#meshd"/></svg><svg class="mt"><use href="#matball"/></svg></div>
     <div class="g"><svg class="rd"><use href="#checker"/></svg></div>
    </div>
    <div class="pmain">
     <div class="crumb"><svg class="i16"><use href="#object"/></svg><span>Circle.002</span><svg class="i16 pn"><use href="#pin"/></svg></div>
     <div class="slots"><div class="list"><i class="tri"></i><i class="dots"></i></div><div class="side"><div class="pm"><svg class="i16"><use href="#plus"/></svg></div><div class="pm two"><svg class="i16"><use href="#minus"/></svg></div><div class="dd b w20 mt8"><svg class="cv big"><use href="#chev"/></svg></div></div></div>
     <div class="newrow"><div class="mb"><svg class="i16"><use href="#matball"/></svg><svg class="cv"><use href="#chev"/></svg></div><div class="nb"><svg class="i16"><use href="#plus"/></svg><span>New</span></div></div>
     <div class="asg"><div>Assign</div><div>Select</div><div>Deselect</div></div>
    </div>
   </div>
  </div>
 </div>
</div>
<script src="grid.js"></script>
</body>
</html>
```

FILE: grid.js
```js
// Viewport grid: ten subdivisions per unit, measured from the world origin.
(function () {
  var g = document.getElementById('grid'), step = 12.115, ox = 858.4, oy = 846.3;
  function line(v, vertical, major) {
    var r = document.createElementNS('http://www.w3.org/2000/svg', 'rect');
    r.setAttribute('x', vertical ? Math.floor(v) : 0);
    r.setAttribute('y', vertical ? 55 : Math.floor(v));
    r.setAttribute('width', vertical ? 1 : 1562);
    r.setAttribute('height', vertical ? 903 : 1);
    r.setAttribute('fill', major ? '#525252' : '#464646');
    g.appendChild(r);
  }
  for (var pass = 0; pass < 2; pass++) {
    for (var i = -71; i < 70; i++) {
      if ((i % 10 === 0) !== (pass === 1)) continue;
      if (ox + i * step > 0 && ox + i * step < 1562) line(ox + i * step, true, pass === 1);
      if (oy + i * step > 55 && oy + i * step < 958) line(oy + i * step, false, pass === 1);
    }
  }
})();
```

FILE: styles.css
```css
* { box-sizing: border-box; }
html, body { margin: 0; height: 100%; overflow: hidden; }
body { width: 1917px; height: 989px; background: #181818; color: #dcdcdc; font: 11.4px/16px Inter, "Liberation Sans", sans-serif; letter-spacing: -.02px; display: flex; flex-direction: column; white-space: nowrap; }
svg { flex: none; display: block; overflow: visible; }
.sprite { position: absolute; width: 0; height: 0; }
.i16 { width: 15px; height: 15px; color: #e2e2e2; fill: currentColor; }
.i14 { width: 13px; height: 13px; }
.sm { width: 14px; height: 14px; margin-left: -2px; }
.cv { width: 10px; height: 10px; color: #c8c8c8; }
.cv.big { width: 12px; height: 12px; }
.blue { background: #4772b3 !important; color: #fff; }
.wh { color: #f2f2f2; }

.titlebar { height: 29px; background: #36353a; border-top: 1px solid #65656a; border-bottom: 1px solid #000; border-radius: 8px 8px 0 0; display: flex; align-items: center; gap: 8px; padding-left: 5px; flex: none; }
.light { width: 12px; height: 12px; border-radius: 50%; }
.red { background: radial-gradient(circle, #8d1109 0 2px, #ff5f57 2.6px); }
.amber { background: #febc2e; }
.green { background: #34c84a; }
.wtitle { display: flex; gap: 6px; align-items: center; margin-left: 789px; font-weight: 700; font-size: 13px; letter-spacing: .08px; color: #b5b4b8; padding-bottom: 2px; }

.topbar { height: 26px; flex: none; display: flex; background: #181818; }
.blogo { margin: 5px 0 0 7px; }
.menus { display: flex; gap: 14.600px; color: #dcdcdc; letter-spacing: -.06px; }
.main { margin: 4px 0 0 10px; width: 230px; }
.wtabs { display: flex; gap: 1px; margin-top: 5px; height: 19px; }
.wtabs span { padding: 2px 9.900px 0; background: #1d1d1d; color: #989898; border-radius: 4px 4px 0 0; letter-spacing: -.12px; }
.wtabs .on { background: #303030; color: #fff; padding: 2px 10px 0 9px; letter-spacing: -.05px; }
.wtabs .add { padding: 2px 3px; }
.add svg { color: #999; }
.idsel { height: 20px; margin-top: 2px; display: flex; align-items: center; background: #1d1d1d; border: 1px solid #3a3a3a; border-radius: 4px; overflow: hidden; flex: none; }
.scene { width: 171px; margin-left: auto; }
.vlayer { width: 151px; margin: 2px 8px 0 6px; }
.idsel .ic { width: 30px; height: 20px; display: flex; align-items: center; padding-left: 4px; gap: 1px; border-right: 1px solid #3a3a3a; background: #232323; }
.idsel span { flex: 1; padding-left: 7px; }
.idsel .dim { margin-right: 5px; color: #777; }
.sq { width: 20px; height: 20px; background: #3d3d3d; padding: 2px; }
.xx { width: 19px; color: #666; padding-left: 3px; }

.workspace { flex: 1; display: flex; min-height: 0; }
.leftcol { width: 1582px; display: flex; flex-direction: column; }
.viewport { height: 903px; position: relative; background: #3e3e3e; overflow: hidden; border-radius: 6px 6px 0 0; }
.scene3d { position: absolute; left: 0; top: 0; }
.axis text { font: 600 11px Inter, sans-serif; text-anchor: middle; fill: #1c1c1c; }
.vhead { position: relative; height: 27px; background: rgba(48,48,48,.72); display: flex; align-items: center; padding: 0 8px 3px 7px; }
.dd { height: 19px; background: #282828; border-radius: 4px; display: flex; align-items: center; justify-content: space-between; padding: 0 3px 0 4px; color: #e2e2e2; flex: none; }
.dd.b { border: 1px solid #3d3d3d; height: 20px; }
.w30 { width: 30px; } .w32 { width: 32px; } .w20 { width: 20px; }
.mode { width: 96px; margin-left: 7px; justify-content: flex-start; }
.mode span { margin-left: 6px; flex: 1; }
.grp { display: flex; height: 19px; border-radius: 4px; overflow: hidden; flex: none; }
.grp > div { width: 18.500px; background: #545454; display: flex; align-items: center; justify-content: center; }
.grp > .dark { background: #282828; width: 32px; gap: 2px; }
.grp > .cvo { width: 19.500px; }
.selm { margin-left: 7px; gap: 1px; }
.vm { margin-left: 13px; width: 448px; }
.hmid { display: flex; gap: 7px; }
.glob { width: 76px; }
.off .dark { opacity: .5; }
.off { opacity: .75; }
.hright { display: flex; gap: 7px; margin-left: auto; }
.shad > div:not(.blue) svg:not(.cv) { color: #c4c4c4; }
.shad { gap: .3px; }
.vtool { position: relative; height: 24px; display: flex; justify-content: space-between; }
.tleft { width: 419px; background: rgba(48,48,48,.72); border-radius: 0 0 5px 0; display: flex; align-items: center; padding: 0 0 2px 6px; }
.num { width: 175px; height: 19px; background: #545454; border-radius: 4px; display: flex; justify-content: space-between; padding: 1px 13px 0 15px; }
.cb { width: 14px; height: 14px; background: #505050; border-radius: 3px; flex: none; }
.cb.on { background: #4772b3; }
.tleft .cb { width: 13px; height: 13px; margin: 0 4px 0 7px; }
.drag { margin: 0 9px 0 auto; color: #b4b4b4; }
.sbox { width: 74px; margin-right: 9px; padding-left: 7px; padding-right: 1px; letter-spacing: -.15px; }
.tright { width: 184px; background: rgba(48,48,48,.72); border-radius: 0 0 0 5px; display: flex; align-items: center; padding: 0 0 2px 10px; gap: 7px; }
.grey { color: #999; margin-right: -3px; }
.xyz { gap: 1px; } .xyz > div { width: 16.300px; color: #d8d8d8; }
.dimg svg { color: #999; }
.opt { width: 65px; padding-left: 7px; }
.vinfo { position: absolute; left: 62px; top: 58px; font-weight: 500; line-height: 18px; color: #fff; text-shadow: 0 0 2px #000, 0 1px 2px #000; letter-spacing: -.07px; }

.toolbar { position: absolute; left: 6px; top: 60px; width: 38px; display: flex; flex-direction: column; gap: 7px; }
.tg { display: flex; flex-direction: column; gap: 1px; border-radius: 4px; overflow: hidden; background: #3a3a3a; }
.tb { height: 34px; background: #282828; padding: 4.500px 7px; position: relative; }
.tg:nth-child(1) .tb:first-child, .tg:nth-child(3) .tb:first-child { height: 33px; }
.tg:nth-child(2) .tb:first-child, .tg:nth-child(4) .tb { height: 33px; }
.tg:nth-child(5) .tb:first-child { height: 33px; }
.tb svg { width: 24px; height: 24px; }
.tb.sel { background: #4772b3; }
.tb.c::after { content: ""; position: absolute; right: 2px; bottom: 2px; border: 2px solid transparent; border-right-color: #999; border-bottom-color: #999; }

.redo { position: absolute; left: 58px; top: 640px; width: 280px; height: 258px; background: #181818; border-radius: 4px; border: 1px solid #242424; padding: 4px 7px 0; box-shadow: 0 0 3px rgba(0,0,0,.4); color: #989898; }
.ptitle { display: flex; align-items: center; gap: 3px; height: 16px; margin: 0 0 11px -1px; }
.ptitle .cv { color: #909090; }
.prow { display: flex; height: 22px; align-items: center; }
.prow label { width: 101px; text-align: right; margin-right: 9px; }
.fld { width: 154px; height: 20px; border: 1px solid #3d3d3d; border-radius: 4px; background: #545454; color: #e6e6e6; text-align: center; line-height: 18px; }
.half { background: linear-gradient(90deg, #4772b3 49%, #545454 49%); }
.menu { background: #222; display: flex; align-items: center; padding: 0 1px 0 4px; }
.menu span { flex: 1; text-align: left; padding-left: 6px; }
.ck { padding-left: 110px; gap: 3px; }
.ck.wh { color: #f2f2f2; }

.npanel { position: absolute; left: 1311px; top: 53px; width: 244px; height: 275px; background: #3a3a3a; border-radius: 4px; padding: 4px 9px 0; color: #dedede; }
.ntitle { display: flex; align-items: center; gap: 3px; height: 18px; margin-left: -2px; color: #f0f0f0; }
.dots { width: 12px; height: 6px; background-image: radial-gradient(circle at 1.5px 1.5px, #bbb .5px, transparent 1px); background-size: 3px 3px; }
.ntitle .dots { margin-left: auto; margin-right: -2px; }
.nl { height: 25px; line-height: 24px; color: #c4c4c4; }
.nl.first { margin-top: 10px; height: 22px; line-height: 22px; }
.nl.up { margin-top: -3px; }
.stack { display: flex; flex-direction: column; gap: 1px; border-radius: 4px; overflow: hidden; }
.nf { height: 19px; background: #545454; display: flex; justify-content: space-between; padding: 1px 14px 0 15px; }
.stack .nf { line-height: 15px; }
.nf.s { border-radius: 4px; margin-bottom: 3px; }
.seg { display: flex; gap: 1px; margin-top: 3px; border-radius: 4px; overflow: hidden; }
.seg div { flex: 1; text-align: center; height: 19px; line-height: 18px; background: #545454; }
.ntabs { position: absolute; left: 1562px; top: 52px; width: 20px; height: 851px; background: #181818; padding-top: 4px; display: flex; flex-direction: column; gap: 4px; }
.ntabs div { width: 17px; height: 41px; writing-mode: vertical-rl; text-align: center; line-height: 17px; background: #1b1b1b; border: 1px solid #343434; border-left: 0; border-radius: 0 4px 4px 0; color: #b0b0b0; padding-left: 1px; }
.ntabs .on { background: #303030; color: #fff; }

.timeline { margin-top: 3px; height: 25px; background: #303030; display: flex; align-items: center; padding: 0 7px; }
.tmen { margin-left: 5px; border: 1px solid #3d3d3d; height: 20px; background: #3d3d3d; gap: 1px; }
.tmen > div.dark { justify-content: space-between; padding: 0 2px 0 7px; }
.tmen > div.pb { width: 71px; } .tmen > div.ky { width: 60px; }
.tmn { margin-left: 8px; width: 514px; }
.rec { width: 38px; opacity: .7; } .rec i { width: 11px; height: 11px; border: 1px solid #aaa; border-radius: 50%; }
.rec .cv { opacity: .4; }
.play { gap: 1px; width: 119px; margin-left: 6px; } .play > div { flex: 1; }
.timeline .tf { width: 74px; height: 19px; background: #545454; border-radius: 4px; text-align: center; line-height: 19px; margin-left: auto; }
.rng { margin-left: 6px; gap: 1px; } .rng > .clk { width: 20px; } .rng > .st { width: 86px; justify-content: space-between; padding: 0 14px 0 14px; } .rng > .en { width: 86px; justify-content: space-between; padding: 0 13px 0 16px; }

.rightcol { width: 331px; margin-left: 3px; display: flex; flex-direction: column; gap: 3px; }
.outliner { height: 313px; background: #282828; border-radius: 6px; overflow: hidden; }
.ohead { height: 26px; display: flex; align-items: center; padding: 0 8px 3px; gap: 5px; }
.srch { width: 119px; height: 20px; background: #1d1d1d; border: 1px solid #3d3d3d; border-radius: 4px; display: flex; align-items: center; gap: 6px; padding-left: 4px; color: #6e6e6e; }
.srch.o { margin-left: 13px; }
.flt { margin-left: auto; }
.sqb { width: 19px; height: 20px; border-radius: 4px; background: #444; padding: 2px; }
.rows { position: relative; height: 280px; background: repeating-linear-gradient(#282828 0 20px, #2b2b2b 20px 40px); }
.r { height: 20px; display: flex; align-items: center; padding: 0 12px 0 22px; color: #bfbfbf; position: relative; }
.r span { padding-top: 2px; }
.r.k { padding-left: 45px; --row: #2a2a2a; }
.r.act { background: #334f80; --row: #334f80; }
.r.act span { color: #ee9d33; }
.oi { width: 15px; height: 15px; color: #e2e2e2; }
.sc { margin-right: 7px; }
.ar { width: 11px; height: 11px; color: #b4b4b4; }
.k .ar { margin: 2px 7px 0 0; }
.dn { margin: 2px 4px 0 2px; }
.box { width: 20px; height: 18px; background: #4c4c4c; border: 1px solid #707070; border-radius: 4px; padding: 1px 1.500px; flex: none; }
.r > .box + span { margin-left: 4px; }
.r.k > .oi + span { margin-left: 5px; }
.k span { flex: none; }
.k b { padding-left: 2px; }
.k b.box { padding-left: 1.500px; }
.k .ob { margin-left: -3px; }
.r.k > .ob + span { margin-left: 3px; }
.ob { background: #5a6d92; border-color: #7486a8; } .gb { background: #2a5f80; border-color: #50789b; }
.or { color: #c47d4b; } .gr { color: #1eb387; }
.end { display: flex; gap: 6px; margin-left: auto; align-items: center; }
.end .oi { width: 14px; height: 14px; }
.ock { width: 11px; height: 11px; margin-right: 1px; }
.dot { position: absolute; left: 8px; top: 8px; width: 4px; height: 4px; border-radius: 50%; background: #e6e6e6; }
.em { position: absolute; left: 3px; top: 3px; width: 15px; height: 15px; color: #fff; }
.tree { position: absolute; left: 29px; top: 45px; width: 1px; height: 130px; background: #666; }

.props { flex: 1; background: #303030; border-radius: 6px 6px 0 0; overflow: hidden; display: flex; flex-direction: column; }
.phead { height: 25px; display: flex; padding: 2px 8px 0; flex: none; }
.srch.p { margin-left: 67px; width: 118px; }
.last { margin-left: auto; justify-content: center; padding: 0; }
.pbody { flex: 1; display: flex; }
.ptabs { width: 28px; background: #1b1b1b; padding-left: 2px; display: flex; flex-direction: column; }
.g { background: #1d1d1d; padding: 7px 5px; margin-bottom: 7px; display: flex; flex-direction: column; gap: 13px; border-radius: 4px 0 0 4px; }
.g:first-child { padding-top: 14px; }
.g svg { width: 15px; height: 15px; color: #aaa; --bg: #1d1d1d; }
.g .rd { color: #ad5160; } .g .wt { color: #ddd; } .g .orr { color: #c47d4b; } .g .bl { color: #5d8bd6; } .g .gn { color: #1eb387; }
.g .mt { color: #cc6170; box-shadow: 0 0 0 6px #303030; border-radius: 1px; background: #303030; }
.pmain { flex: 1; padding: 10px 7px 0 8px; }
.crumb { display: flex; align-items: center; height: 16px; color: #e2e2e2; padding: 0 2px 0 2px; }
.crumb span { margin-left: 9px; }
.pn { margin-left: auto; color: #999; }
.slots { display: flex; justify-content: space-between; margin-top: 18px; height: 80px; }
.list { width: 260px; background: #252525; border: 1px solid #3d3d3d; border-radius: 4px; display: flex; align-items: flex-end; padding: 0 0 6px 11px; }
.list .dots { margin-left: 116px; }
.tri { border-left: 6px solid #b0b0b0; border-top: 3px solid transparent; border-bottom: 3px solid transparent; }
.pm { width: 20px; height: 19px; background: #545454; padding: 1.500px 2px; border-radius: 4px 4px 0 0; }
.pm.two { margin-top: 1px; border-radius: 0 0 4px 4px; }
.pm svg, .nb svg { width: 16px; height: 16px; }
.mt8 { margin-top: 7px; justify-content: center; padding: 0; }
.newrow { display: flex; margin-top: 5px; height: 20px; border-radius: 4px; overflow: hidden; gap: 1px; }
.mb { width: 31px; background: #282828; display: flex; align-items: center; gap: 2px; padding-left: 4px; }
.nb { flex: 1; background: #545454; display: flex; align-items: center; padding-left: 3px; color: #e6e6e6; }
.nb span { flex: 1; text-align: center; padding-right: 2px; }
.asg { display: flex; gap: 1px; margin-top: 6px; border-radius: 4px; overflow: hidden; }
.asg div { flex: 1; height: 19px; line-height: 19px; background: #545454; text-align: center; color: #e6e6e6; }
```
